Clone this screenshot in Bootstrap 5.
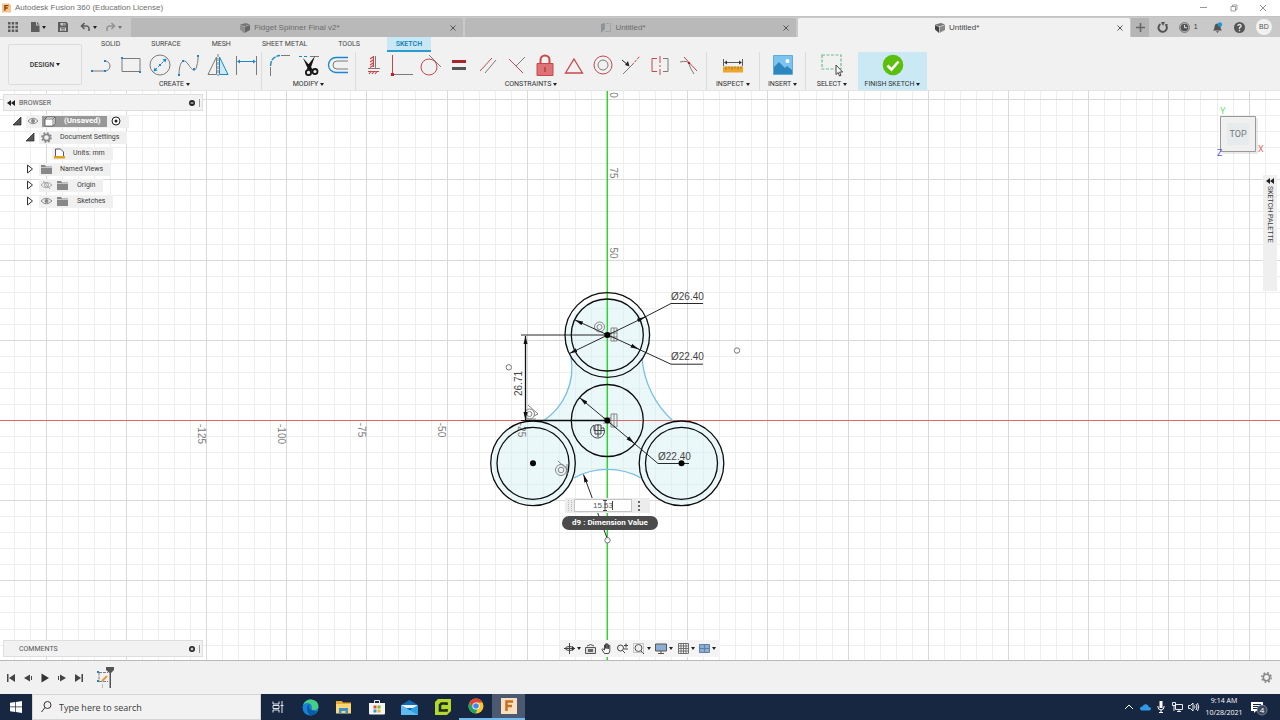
<!DOCTYPE html>
<html lang="en">
<head>
<meta charset="utf-8">
<meta name="viewport" content="width=device-width, initial-scale=1">
<title>Autodesk Fusion 360 (Education License)</title>
<link href="https://cdn.jsdelivr.net/npm/bootstrap@5.3.0/dist/css/bootstrap.min.css" rel="stylesheet">
<style>
body{font-family:Roboto,"Liberation Sans",sans-serif;font-size:7px;line-height:12px;color:#3c3c3c;background:#fff}
svg{display:block;flex:none;fill:none;overflow:visible}
.btn{--bs-btn-padding-x:0;--bs-btn-padding-y:0;--bs-btn-border-width:0;--bs-btn-font-size:7px;--bs-btn-line-height:12px;--bs-btn-border-radius:0;--bs-btn-color:#333;display:flex;align-items:center;justify-content:center}
.caret::after{content:"";border:2px solid transparent;border-top:3px solid #222;border-bottom:0;margin-left:2px}
.titlebar{height:16px;padding:0 2px;font:8px/16px "Liberation Sans",sans-serif;color:#6d6d6d}
.docbar{height:21px;background:#c9c9c9;border-top:1px solid #c2c2c2;font-family:"Liberation Sans",sans-serif;font-size:8px}
.quick{width:130px}
.doctab{background:#b9b9b9;color:#6c6c6c;margin:1px 1px 0;border-radius:2px 2px 0 0;flex:1 1 0;padding:0 2px 0 4px}
.doctab.current{background:#f1f1f1;color:#444}
.plus{width:18px;background:#b5b5b5;margin-top:1px}
.account{width:131px}
.avatar{width:16px;height:16px;border-radius:50%;background:#f1f1f1;font-size:7px;line-height:16px;text-align:center;color:#555}
.ribbon{height:54px;background:#f1f1f1;border-bottom:1px solid #e4e4e4}
.design{width:74px;height:41px;margin:7px 6px 0 8px;border:1px solid #dcdcdc!important;border-radius:2px;font-weight:500}
.modes{height:15px;padding-left:13px;column-gap:31px}
.modes a{color:#444;text-decoration:none;line-height:14px}
.modes .picked{background:#c9e8f5;color:#1583b8;font-weight:600;border-bottom:2px solid #2d9bd0;width:44px;margin-left:-4px;text-align:center;height:15px}
.group{border-right:1px solid #dcdcdc;padding:0 3px}
.group>:last-child,.finish>:last-child{margin-top:1px}
.group>:first-child,.finish>:first-child{margin-top:1px}
.finish{width:69px;background:#cbe9f4}
.g{stroke:#7b7b7b}.b{stroke:#1b87cf}.r{stroke:#c9464b}.k{stroke:#333}
.bf{fill:#1b87cf}.rf{fill:#c21f26}
.stage{min-height:0;background:#fff;overflow:hidden}
.scene{width:100%;height:100%;position:absolute;inset:0}
.dim{font:10px "Liberation Sans",sans-serif;fill:#444}
.axisnum{font:10px "Liberation Sans",sans-serif;fill:#808080;text-anchor:middle}
.sel{stroke:#76bfe3;stroke-width:1.3}
.edge{stroke:#0d0d0d;stroke-width:1.3}
.lead1{stroke:#111;stroke-width:.9}
.glyph{stroke:#858585;stroke-width:1}
.valuebar{height:15px;background:#ececec;padding:1px 9px}
.valuebar input{width:58px;height:13px;border:1px solid #c4c4c4;background:#fff;font:8px "Liberation Sans",sans-serif;color:#555;padding:0 18px 0 0;text-align:right;border-radius:0}
.tip{height:14px;border-radius:7px;background:#4b4b4b;color:#fff;font:bold 8px/14px Roboto,sans-serif;text-align:center}
.dock{width:200px;height:17px;background:#f2f2f2;border:1px solid #dedede;color:#555;padding:0 1px 0 3px;gap:4px}
.left-top{top:3px;left:3px}.left-bottom{bottom:3px;left:3px;padding-left:15px}
.tree{top:22px;left:12px}
.tree li{height:16px}
.chip{background:#f0f0f0;height:13px;padding:0 8px 0 2px}
.chip.fold{gap:5px}
.twist{width:10px;height:10px;margin-right:4px}
.unsaved{background:#989898;color:#fff;font-weight:700;font-size:8px;height:11px;width:65px;padding-left:2px}
.l1{padding-left:13px}.l2{padding-left:36px}
.cube{top:14px;right:12px}
.palette{top:84px;right:3px;width:14px;height:116px;background:#efefef;writing-mode:vertical-rl;line-height:14px;padding-top:3px;gap:2px}
.nav-tools{left:50%;margin-left:-80px;bottom:3px;width:160px;height:17px;background:#f4f4f4}
.timeline{height:34px;background:#f1f1f1;border-top:1px solid #b9b9b9;padding:0 5px 0 2px}
.timeline .btn{width:17px;height:20px}
.history{margin-left:10px}
.taskbar{height:26px;background:#172741;color:#fff;font-family:"Open Sans",sans-serif}
.start{width:32px}
.search{width:229px;background:#f2f2f2;border:1px solid #d5d5d5}
.search input{font:9px "Open Sans",sans-serif;color:#333;background:none;border:0;outline:0;width:180px;padding:0}
.search input::placeholder{color:#3a3a3a;opacity:1}
.app{width:33px}
.app.running{border-bottom:2px solid #76b9ed}
.app.front{background:#4b5a70}
.clock{width:46px;line-height:12px;text-align:center}
.tray{width:16px}
</style>
</head>
<body class="vh-100 d-flex flex-column overflow-hidden">
<header class="titlebar d-flex align-items-center justify-content-between">
  <div class="d-flex align-items-center"><svg class="me-1" width="9" height="10" viewBox="0 0 11 11"><path fill="#f6c48c" d="M0 0h9l2 2v9H0z"/><path d="M3.500 9V2.500H8M3.500 5.500H7" stroke="#8d3d0c" stroke-width="1.600"/></svg><span>Autodesk Fusion 360 (Education License)</span></div>
  <div class="d-flex align-items-center">
    <button class="btn px-2" aria-label="Minimize"><svg width="14" height="10" viewBox="0 0 14 10"><path stroke="#999" d="M4 4.500h7"/></svg></button>
    <button class="btn px-2" aria-label="Restore"><svg width="14" height="10" viewBox="0 0 14 10"><path stroke="#888" stroke-width=".8" d="M5 3.500h4.500V8H5zM6.500 3.500V2H11v4.500H9.500"/></svg></button>
    <button class="btn px-2" aria-label="Close"><svg width="14" height="10" viewBox="0 0 14 10"><path stroke="#777" stroke-width=".8" d="M4 2l6 6M10 2L4 8"/></svg></button>
  </div>
</header>

<div class="docbar d-flex">
  <div class="quick d-flex align-items-center ps-1 gap-2">
    <button class="btn ms-1" aria-label="Data panel"><svg width="10" height="10" viewBox="0 0 10 10"><path fill="#5d5d5d" d="M0 0h2.500v2.500H0zM3.700 0h2.500v2.500H3.700zM7.400 0H10v2.500H7.400zM0 3.700h2.500v2.500H0zM3.700 3.700h2.500v2.500H3.700zM7.400 3.700H10v2.500H7.400zM0 7.400h2.500V10H0zM3.700 7.400h2.500V10H3.700zM7.400 7.400H10V10H7.400z"/></svg></button>
    <button class="btn caret ms-1" aria-label="File"><svg width="10" height="10" viewBox="0 0 10 10"><path fill="#5d5d5d" d="M1 0h5v3.500h3.500V10H1zM7 0l2.500 2.500H7z"/></svg></button>
    <button class="btn ms-1 me-1" aria-label="Save"><svg width="10" height="10" viewBox="0 0 10 10"><path fill="#5d5d5d" d="M0 0h8.500L10 1.500V10H0z"/><path fill="#c9c9c9" d="M2.500 1h5v2.500h-5zM2 5.500h6V9H2z"/><path fill="#5d5d5d" d="M5.300 1.300h1.200v2H5.300zM3 6.300h4v.8H3zM3 7.700h4v.8H3z"/></svg></button>
    <button class="btn caret" aria-label="Undo"><svg width="11" height="10" viewBox="0 0 11 10"><path stroke="#5d5d5d" stroke-width="1.600" d="M4.500 1L1.500 4l3 3M2 4h4.500Q9.500 4 9 9"/></svg></button>
    <button class="btn caret opacity-50" aria-label="Redo"><svg width="11" height="10" viewBox="0 0 11 10"><path stroke="#5d5d5d" stroke-width="1.600" d="M6.500 1l3 3-3 3M9 4H4.500Q1.500 4 2 9"/></svg></button>
  </div>
  <div class="doctab d-flex align-items-center"><span class="flex-fill d-flex justify-content-center align-items-center gap-1"><svg width="10" height="10" viewBox="0 0 10 10"><path fill="#777" d="M0 1.500L6 0l4 1.500L4 3.500z"/><path fill="#8d8d8d" d="M0 2l4 2v6L0 6.500z"/><path fill="#666" d="M4.500 4L10 2v5l-5.500 3z"/></svg>Fidget Spinner Final v2*</span><button class="btn px-1" aria-label="Close tab"><svg width="8" height="8" viewBox="0 0 8 8"><path stroke="#555" d="M1.500 1.500l5 5M6.500 1.500l-5 5"/></svg></button></div>
  <div class="doctab d-flex align-items-center"><span class="flex-fill d-flex justify-content-center align-items-center gap-1"><svg width="10" height="10" viewBox="0 0 10 10"><path fill="#8c9696" d="M0 1l4-1v6l-4 4z"/><path stroke="#999" d="M5.500.5h4v8h-6" stroke-dasharray="2 1"/></svg>Untitled*</span><button class="btn px-1" aria-label="Close tab"><svg width="8" height="8" viewBox="0 0 8 8"><path stroke="#555" d="M1.500 1.500l5 5M6.500 1.500l-5 5"/></svg></button></div>
  <div class="doctab current d-flex align-items-center"><span class="flex-fill d-flex justify-content-center align-items-center gap-1"><svg width="10" height="10" viewBox="0 0 10 10"><path fill="#777" d="M0 1.500L6 0l4 1.500L4 3.500z"/><path fill="#444" d="M0 2l4 2v6L0 6.500z"/><path fill="#888" d="M4.500 4L10 2v5l-5.500 3z"/></svg>Untitled*</span><button class="btn px-1" aria-label="Close tab"><svg width="8" height="8" viewBox="0 0 8 8"><path stroke="#555" d="M1.500 1.500l5 5M6.500 1.500l-5 5"/></svg></button></div>
  <button class="btn plus" aria-label="New tab"><svg width="9" height="9" viewBox="0 0 9 9"><path stroke="#666" stroke-width="1.600" d="M4.500 0v9M0 4.500h9"/></svg></button>
  <div class="account d-flex align-items-center justify-content-between ps-2 pe-2">
    <button class="btn" aria-label="Extensions"><svg width="11" height="11" viewBox="0 0 11 11"><path stroke="#555" stroke-width="2" d="M3.500 2A4.200 4.200 0 1 0 9 3"/><path fill="#555" d="M4 0h4L6 4zM8 2l3 0-2 2.500z"/></svg></button>
    <button class="btn gap-1 me-1" aria-label="Job status"><svg width="11" height="11" viewBox="0 0 11 11"><circle cx="5.500" cy="5.500" r="4.900" stroke="#666" stroke-width=".9"/><circle cx="5.500" cy="5.500" r="3.800" fill="#555"/><path stroke="#ddd" d="M5.500 3v2.700H8"/></svg>1</button>
    <button class="btn" aria-label="Notifications"><svg width="11" height="11" viewBox="0 0 11 11"><path fill="#555" d="M1 8.500Q2.500 7.500 2.500 4.500 3 1.500 5.500 1.500T8.500 4.500Q8.500 7.500 10 8.500zM4 9.200h3L5.500 11z"/><circle cx="8" cy="2.500" r="2.200" fill="#179bd7"/></svg></button>
    <button class="btn" aria-label="Help"><svg width="11" height="11" viewBox="0 0 11 11"><circle cx="5.500" cy="5.500" r="5.500" fill="#555"/><path stroke="#e3e3e3" stroke-width="1.300" d="M3.800 4Q4 2.500 5.500 2.500T7.200 4Q7 5 5.500 5.700V7M5.500 7.800v1.400"/></svg></button>
    <span class="avatar">BD</span>
  </div>
</div>

<nav class="ribbon d-flex flex-shrink-0">
  <button class="btn design caret">DESIGN</button>
  <div class="flex-fill d-flex flex-column">
    <div class="modes d-flex">
      <a href="#">SOLID</a><a href="#">SURFACE</a><a href="#">MESH</a><a href="#">SHEET METAL</a><a href="#">TOOLS</a><a href="#" class="picked">SKETCH</a>
    </div>
    <div class="d-flex flex-fill">
      <div class="group px-0" style="width:174px">
        <div class="d-flex">
          <button class="btn flex-fill" aria-label="Line"><svg width="24" height="24" viewBox="0 0 24 24"><path class="g" d="M2 18h13a5 5 0 0 0 0-10"/><path class="bf" d="M1 17h2v2H1zM14 17h2v2h-2zM14 7h2v2h-2z"/></svg></button>
          <button class="btn flex-fill" aria-label="Rectangle"><svg width="24" height="24" viewBox="0 0 24 24"><path class="g" d="M3 5.500h18v13H3z"/><path class="bf" d="M2 4h2v2H2zM20 18h2v2h-2z"/></svg></button>
          <button class="btn flex-fill" aria-label="Circle"><svg width="24" height="24" viewBox="0 0 24 24"><circle class="g" cx="12" cy="12" r="10"/><path class="b" d="M7 17L17 7" stroke-dasharray="3 1.500"/><path class="bf" d="M5.500 18.500l1-4 3 3zM18.500 5.500l-1 4-3-3zM11 11h2v2h-2z"/></svg></button>
          <button class="btn flex-fill" aria-label="Spline"><svg width="24" height="24" viewBox="0 0 24 24"><path class="g" d="M2 22C2 8 7 5 11 11S18 20 19.500 14 21 8 21 3"/><path class="bf" d="M1 21h2v2H1zM16 15h2v2h-2zM20 2h2v2h-2zM5 7h2v2H5z"/></svg></button>
          <button class="btn flex-fill" aria-label="Mirror"><svg width="24" height="24" viewBox="0 0 24 24"><path class="g" d="M10.500 4v17.500H2z"/><path class="b" fill="#cfe9f6" d="M13.500 4v17.500H22z"/><path class="g" stroke-dasharray="3 1" d="M12 1v22"/></svg></button>
          <button class="btn flex-fill" aria-label="Dimension"><svg width="24" height="24" viewBox="0 0 24 24"><path class="g" d="M1.500 3v19M21.500 3v19"/><path class="b" d="M4 8.500h16"/><path class="bf" d="M2 8.500l3-2v4zM21 8.500l-3-2v4z"/></svg></button>
        </div>
        <button class="btn caret w-100">CREATE</button>
      </div>
      <div class="group" style="width:94px">
        <div class="d-flex">
          <button class="btn flex-fill" aria-label="Fillet"><svg width="24" height="24" viewBox="0 0 24 24"><path class="b" stroke-width="1.400" stroke-dasharray="5 1" d="M2.500 13Q3 3.500 12 2.500"/><path class="g" d="M13 2.500h9M2.500 14v9"/></svg></button>
          <button class="btn flex-fill" aria-label="Trim"><svg width="24" height="24" viewBox="0 0 24 24"><path class="b" stroke-dasharray="3 2" d="M2 3.500h9"/><path class="g" d="M13 3.500h9"/><path fill="#161616" d="M6 5l8 9 2 3-2 1-4-4zM18 3l-5 14-3-1 1-4z"/><circle stroke="#161616" stroke-width="1.800" cx="11.500" cy="19.500" r="2.600"/><circle stroke="#161616" stroke-width="1.800" cx="18" cy="18.500" r="2.500"/></svg></button>
          <button class="btn flex-fill" aria-label="Offset"><svg width="24" height="24" viewBox="0 0 24 24"><path class="b" stroke-width="1.300" d="M22 4.500h-12a7.500 7.500 0 0 0 0 15h12"/><path class="g" d="M22 8H11a4 4 0 0 0 0 8h11"/></svg></button>
        </div>
        <button class="btn caret w-100">MODIFY</button>
      </div>
      <div class="group" style="width:351px">
        <div class="d-flex">
          <button class="btn flex-fill" aria-label="Horizontal/Vertical"><svg width="24" height="24" viewBox="0 0 24 24"><path class="g" d="M14.500 3v12M7 15.500h12"/><path class="r" stroke-width="1.200" d="M12.500 3v11M9 6l3-2M9 9l3-2M9 12l3-2M9 14.500l3-2M7 18.500h11M8 21l2-2.500M11 21l2-2.500M14 21l2-2.500"/></svg></button>
          <button class="btn flex-fill" aria-label="Coincident"><svg width="24" height="24" viewBox="0 0 24 24"><path class="r" d="M2.500 2v18"/><path class="g" d="M4 21.500h19"/><path class="rf" d="M1 20h3v3H1z"/></svg></button>
          <button class="btn flex-fill" aria-label="Tangent"><svg width="24" height="24" viewBox="0 0 24 24"><circle class="r" cx="10" cy="14" r="8"/><path class="g" d="M10 2l12 12"/></svg></button>
          <button class="btn flex-fill" aria-label="Equal"><svg width="24" height="24" viewBox="0 0 24 24"><path fill="#a9252b" d="M5 7h14v3H5z"/><path fill="#555" d="M5 14h14v3H5z"/></svg></button>
          <button class="btn flex-fill" aria-label="Parallel"><svg width="24" height="24" viewBox="0 0 24 24"><path class="r" d="M4 18L16 5"/><path class="g" d="M9 20L20 7"/></svg></button>
          <button class="btn flex-fill" aria-label="Perpendicular"><svg width="24" height="24" viewBox="0 0 24 24"><path class="r" d="M4 6l14 14"/><path class="g" d="M11 13l9-9"/></svg></button>
          <button class="btn flex-fill" aria-label="Fix"><svg width="24" height="24" viewBox="0 0 24 24"><path stroke="#c9464b" stroke-width="2" d="M7.500 11V7a4.500 4.500 0 0 1 9 0v4"/><path fill="#dd7376" stroke="#c9464b" d="M4 10.500h16v12H4z"/><path stroke="#a9252b" d="M12 14v5"/></svg></button>
          <button class="btn flex-fill" aria-label="Midpoint"><svg width="24" height="24" viewBox="0 0 24 24"><path class="r" stroke-width="1.300" d="M12 6l8.500 14h-17z"/></svg></button>
          <button class="btn flex-fill" aria-label="Concentric"><svg width="24" height="24" viewBox="0 0 24 24"><circle class="r" cx="12" cy="12" r="9"/><circle class="g" cx="12" cy="12" r="5"/></svg></button>
          <button class="btn flex-fill" aria-label="Collinear"><svg width="24" height="24" viewBox="0 0 24 24"><path class="g" d="M4 21l9-9"/><path class="r" stroke-dasharray="3 1" d="M13 12l8-9"/><path stroke="#222" d="M3 7l6 5"/><path fill="#222" d="M10.500 13.500L6 12l3-4z"/></svg></button>
          <button class="btn flex-fill" aria-label="Symmetry"><svg width="24" height="24" viewBox="0 0 24 24"><path class="r" d="M9 5.500H4v13h5"/><path class="g" d="M15 5.500h5v13h-5"/><path class="r" stroke-dasharray="7 2 2 2" d="M12 3v19"/></svg></button>
          <button class="btn flex-fill" aria-label="Curvature"><svg width="24" height="24" viewBox="0 0 24 24"><path class="g" d="M3 9q8-2 9 2t5 10"/><path class="r" d="M7 4l13 14"/><path class="rf" d="M11 9h2v2h-2z"/></svg></button>
        </div>
        <button class="btn caret w-100">CONSTRAINTS</button>
      </div>
      <div class="group" style="width:53px">
        <button class="btn w-100" aria-label="Measure"><svg width="24" height="24" viewBox="0 0 24 24"><path class="k" stroke-width=".8" d="M2.500 6v7M21.500 6v7M4 9.500h16"/><path fill="#333" d="M3 9.500l3-2v4zM21 9.500l-3-2v4z"/><path fill="#eda52c" d="M2 13.500h20v6H2z"/><path stroke="#8b5b0e" stroke-width=".7" d="M5 13.500v3M8 13.500v2M11 13.500v3M14 13.500v2M17 13.500v3M20 13.500v2"/></svg></button>
        <button class="btn caret w-100">INSPECT</button>
      </div>
      <div class="group" style="width:46px">
        <button class="btn w-100" aria-label="Insert image"><svg width="24" height="24" viewBox="0 0 24 24"><path fill="#7cc4ef" stroke="#4a9fd4" stroke-width=".8" d="M2.500 2.500h19v19h-19z"/><path fill="#2e86bf" d="M3 14l5-5 6 6 2-2 5 4v4H3z"/><circle cx="16.500" cy="8" r="2" fill="#fff"/></svg></button>
        <button class="btn caret w-100">INSERT</button>
      </div>
      <div class="group border-0" style="width:52px">
        <button class="btn w-100" aria-label="Select"><svg width="24" height="24" viewBox="0 0 24 24"><path stroke="#6dbd8d" stroke-width="1.200" stroke-dasharray="3 1.500" d="M2 2h19v14H2z"/><path fill="#fff" stroke="#333" stroke-width=".9" d="M16 12v9.500l2.200-2 1.300 3.500 1.500-.6-1.400-3.400h3z"/></svg></button>
        <button class="btn caret w-100">SELECT</button>
      </div>
      <div class="finish">
        <button class="btn w-100" aria-label="Finish sketch"><svg width="24" height="24" viewBox="0 0 24 24"><circle cx="12" cy="12" r="10.300" fill="#5bbf0b"/><path stroke="#fff" stroke-width="2.600" d="M6.500 12.500l4 4 7-8"/></svg></button>
        <button class="btn caret w-100">FINISH SKETCH</button>
      </div>
    </div>
  </div>
</nav>

<main class="stage flex-fill position-relative">
  <svg class="scene" viewBox="0 91 1280 569" preserveAspectRatio="xMidYMid slice">
    <defs>
      <marker id="tip" viewBox="0 0 8 6" refX="8" refY="3" markerWidth="8" markerHeight="6" markerUnits="userSpaceOnUse" orient="auto-start-reverse"><path d="M0 1L8 3 0 5z" fill="#111"/></marker>
    </defs>
    <g id="grid" shape-rendering="crispEdges"></g>
    <path fill="#d3eff5" fill-opacity=".45" d="M565 335A42.300 42.300 0 0 1 649 335Q649 350 642 360A95 95 0 0 0 673 421A42.300 42.300 0 1 1 641 478A70 70 0 0 0 574 478A42.300 42.300 0 1 1 543 421A63.700 63.700 0 0 0 572 360Q565 350 565 335z"/>
    <g><path stroke="#e36464" d="M0 420.500h1280"/><path stroke="#2bd62b" stroke-width="1.500" d="M607.300 91v569"/></g>
    <g class="axisnum">
      <text transform="translate(610 95) rotate(90)">0</text>
      <text transform="translate(610 173) rotate(90)">75</text>
      <text transform="translate(610 253) rotate(90)">50</text>
      <text transform="translate(198 434) rotate(90)">-125</text>
      <text transform="translate(278 434) rotate(90)">-100</text>
      <text transform="translate(358 430) rotate(90)">-75</text>
      <text transform="translate(438 430) rotate(90)">-50</text>
      <text transform="translate(518 430) rotate(90)">-25</text>
    </g>
    <g class="sel">
      <path d="M571 357A63.700 63.700 0 0 1 543 421M673 421A95 95 0 0 1 642 358M574 478A70 70 0 0 1 641 478"/>
    </g>
    <g class="edge">
      <circle cx="607.300" cy="335" r="42.300"/><circle cx="607.300" cy="335" r="36"/>
      <circle cx="607.300" cy="420.500" r="36"/>
      <circle cx="533" cy="463.300" r="42.300"/><circle cx="533" cy="463.300" r="36"/>
      <circle cx="681.500" cy="463.300" r="42.300"/><circle cx="681.500" cy="463.300" r="36"/>
      <path d="M525 420.500H607"/>
    </g>
    <g class="glyph">
      <circle cx="599.500" cy="327" r="5"/><circle cx="599.500" cy="327" r="2.500"/>
      <path d="M611 328h6v13h-6zM614 328v13M609 333h8M609 337h8M611 414h6v13h-6zM614 414v13M603 418h8M603 423h8"/>
      <circle cx="529.500" cy="414" r="5"/><circle cx="529.500" cy="414" r="2.500"/><path d="M528 405l10 9-4 2M526 419h10"/>
      <circle cx="561" cy="470" r="5.500"/><circle cx="561" cy="470" r="2.800"/><path d="M558 461l10 9M567 464v10"/>
      <path stroke="#444" d="M594 425a7 7 0 1 0 10.500 5.500H594zM595 425h6v9h-6zM598 424v13M601 428h3v3"/>
    </g>
    <g class="lead1">
      <path d="M521 335H607M521 420.500h5"/>
      <path stroke-width="1.300" d="M525.500 420V336" marker-end="url(#tip)" marker-start="url(#tip)"/>
      <path d="M569.500 353.500L645 317" marker-start="url(#tip)" marker-end="url(#tip)"/><path d="M643 318L671 303.500h32"/>
      <path d="M575 320L638.500 349" marker-start="url(#tip)" marker-end="url(#tip)"/><path d="M636 348L671 364.200h32"/>
      <path d="M580 398L634 443" marker-start="url(#tip)" marker-end="url(#tip)"/><path d="M632 441.500L658 463.500h31"/>
      <path d="M583.500 474.500L607 538" marker-start="url(#tip)"/>
    </g>
    <g fill="#000"><circle cx="607.300" cy="335" r="3"/><circle cx="607.300" cy="420.500" r="3"/><circle cx="533" cy="463.300" r="3"/><circle cx="681.500" cy="463.300" r="3"/></g>
    <g fill="#fff" stroke="#666" stroke-width=".9"><circle cx="508.800" cy="367.300" r="2.700"/><circle cx="737" cy="350.500" r="2.700"/><circle cx="607.500" cy="540.300" r="2.700"/></g>
    <g class="dim">
      <text x="671" y="300">Ø26.40</text>
      <text x="671" y="360">Ø22.40</text>
      <text x="658" y="460">Ø22.40</text>
      <text transform="translate(522 396) rotate(-90)">26.71</text>
    </g>
    <foreignObject x="565" y="498" width="85" height="15">
      <div class="valuebar d-flex align-items-center justify-content-between"><input type="text" value="15.53" aria-label="Dimension value"><svg width="4" height="10" viewBox="0 0 4 10"><path fill="#666" d="M1 0h2v2H1zM1 4h2v2H1zM1 8h2v2H1z"/></svg></div>
    </foreignObject>
    <path stroke="#333" stroke-width=".9" d="M603 500.500h4M603 510.500h4M605 500.500v10M612.500 501v9"/>
    <path stroke="#bbb" stroke-dasharray="1 1" d="M568.500 500v11M571.500 500v11"/>
    <foreignObject x="562" y="516" width="96" height="14"><div class="tip">d9 : Dimension Value</div></foreignObject>
  </svg>

  <div class="dock left-top position-absolute d-flex align-items-center">
    <svg width="8" height="6" viewBox="0 0 8 6"><path fill="#222" d="M4 0v6L0 3zM8 0v6L4 3z"/></svg><span class="flex-fill">BROWSER</span>
    <svg width="14" height="10" viewBox="0 0 14 10"><circle cx="5" cy="5" r="3" fill="#222"/><path stroke="#fff" d="M3.500 5h3"/><path stroke="#999" d="M12.500 1v8"/></svg>
  </div>
  <ul class="tree position-absolute list-unstyled m-0">
    <li class="d-flex align-items-center"><svg class="twist" viewBox="0 0 10 10"><path fill="#555" stroke="#222" stroke-width=".7" d="M9 1v8H1z"/></svg>
      <span class="chip d-flex align-items-center gap-1"><svg width="10" height="8" viewBox="0 0 10 8"><path stroke="#888" d="M0 4Q5-1.500 10 4 5 9.500 0 4z"/><circle cx="5" cy="4" r="2" fill="#888"/></svg><span class="unsaved d-flex align-items-center gap-2"><svg width="12" height="11" viewBox="0 0 12 11"><path fill="#fff" stroke="#555" stroke-width=".8" d="M1 3l2-2h8v7l-2 2H1zM1 3h8v7M9 3l2-2"/></svg>(Unsaved)</span><svg width="10" height="10" viewBox="0 0 10 10"><circle cx="5" cy="5" r="4" stroke="#222" fill="#fff"/><circle cx="5" cy="5" r="1.500" fill="#222"/></svg></span></li>
    <li class="d-flex align-items-center l1"><svg class="twist" viewBox="0 0 10 10"><path fill="#555" stroke="#222" stroke-width=".7" d="M9 1v8H1z"/></svg>
      <span class="chip d-flex align-items-center gap-2"><svg width="11" height="11" viewBox="0 0 11 11"><circle cx="5.500" cy="5.500" r="3.200" stroke="#888" stroke-width="1.800"/><circle cx="5.500" cy="5.500" r="4.600" stroke="#888" stroke-width="1.600" stroke-dasharray="1.800 1.800"/></svg>Document Settings</span></li>
    <li class="d-flex align-items-center l2"><span class="chip d-flex align-items-center gap-2 ms-1"><svg width="11" height="11" viewBox="0 0 11 11"><path fill="#fff" stroke="#445" stroke-width=".9" d="M1.500 1h5l3 3v5h-8z"/><path fill="#e0a020" d="M0 8h11v2.500H0z"/></svg>Units: mm</span></li>
    <li class="d-flex align-items-center l1"><svg class="twist" viewBox="0 0 10 10"><path stroke="#333" fill="#fff" d="M2.500 1v8L7.500 5z"/></svg>
      <span class="chip d-flex align-items-center gap-2"><svg width="11" height="9" viewBox="0 0 11 9"><path fill="#888" d="M0 0h4l1 1.500h6V9H0z"/><path stroke="#f0f0f0" stroke-width=".6" d="M0 2.500h11"/></svg>Named Views</span></li>
    <li class="d-flex align-items-center l1"><svg class="twist" viewBox="0 0 10 10"><path stroke="#333" fill="#fff" d="M2.500 1v8L7.500 5z"/></svg>
      <span class="chip fold d-flex align-items-center"><svg width="11" height="8" viewBox="0 0 11 8"><path stroke="#999" stroke-width=".8" d="M0 4Q5-1.500 11 4 5 9.500 0 4zM2 0l7 8"/><circle cx="5.500" cy="4" r="2" stroke="#999" stroke-width=".8"/></svg><svg class="me-1" width="11" height="9" viewBox="0 0 11 9"><path fill="#888" d="M0 0h4l1 1.500h6V9H0z"/><path stroke="#f0f0f0" stroke-width=".6" d="M0 2.500h11"/></svg>Origin</span></li>
    <li class="d-flex align-items-center l1"><svg class="twist" viewBox="0 0 10 10"><path stroke="#333" fill="#fff" d="M2.500 1v8L7.500 5z"/></svg>
      <span class="chip fold d-flex align-items-center"><svg width="11" height="8" viewBox="0 0 11 8"><path stroke="#888" d="M0 4Q5-1.500 11 4 5 9.500 0 4z"/><circle cx="5.500" cy="4" r="2" fill="#888"/></svg><svg class="me-1" width="11" height="9" viewBox="0 0 11 9"><path fill="#888" d="M0 0h4l1 1.500h6V9H0z"/><path stroke="#f0f0f0" stroke-width=".6" d="M0 2.500h11"/></svg>Sketches</span></li>
  </ul>

  <svg class="cube position-absolute" width="54" height="54" viewBox="0 0 54 54" font-family="Roboto, sans-serif" font-size="9">
    <path fill="#b8b8b8" fill-opacity=".3" d="M8 13h36v36H8z"/><path fill="#f0f0f0" stroke="#999" d="M6.500 11.500h35v35h-35z"/><path fill="#e6ecee" d="M13 18h22v22H13z"/>
    <text x="24" y="32" text-anchor="middle" fill="#777">TOP</text><text x="6" y="9" fill="#6be06b">Y</text><text x="44" y="47" fill="#e26a6a">X</text><text x="3" y="51" fill="#5a5ae0">Z</text>
  </svg>
  <div class="palette position-absolute d-flex align-items-center"><svg width="8" height="6" viewBox="0 0 8 6"><path fill="#222" d="M4 0v6L0 3zM8 0v6L4 3z"/></svg>SKETCH PALETTE</div>

  <div class="dock left-bottom position-absolute d-flex align-items-center">
    <span class="flex-fill">COMMENTS</span>
    <svg width="14" height="10" viewBox="0 0 14 10"><circle cx="5" cy="5" r="3" fill="#222"/><path stroke="#fff" d="M3.500 5h3M5 3.500v3"/><path stroke="#999" d="M12.500 1v8"/></svg>
  </div>
  <div class="nav-tools position-absolute d-flex align-items-center justify-content-between px-1">
    <button class="btn caret" aria-label="Orbit"><svg width="11" height="11" viewBox="0 0 11 11"><path stroke="#444" d="M5.500 0v11M0 5.500h11"/><ellipse cx="5.500" cy="5.500" rx="4" ry="2" stroke="#444"/><path fill="#333" d="M8 3l3 2.500L8 8z"/></svg></button>
    <button class="btn" aria-label="Look at"><svg width="11" height="11" viewBox="0 0 11 11"><path stroke="#555" fill="#ddd" d="M.5 4.500h10v6H.5zM2 3Q5.500 0 9 3"/><path fill="#666" d="M3 6h5v3H3z"/></svg></button>
    <button class="btn" aria-label="Pan"><svg width="11" height="11" viewBox="0 0 11 11"><path fill="#fff" stroke="#333" stroke-width=".9" d="M3.500 10.500L.8 6.500l1-.7L3.500 7V2h1.200v3.500V.8H6V5.500V1.200h1.200V6l.3-3.500h1.300L8.800 8l-1 2.500z"/></svg></button>
    <button class="btn" aria-label="Zoom"><svg width="12" height="11" viewBox="0 0 12 11"><circle cx="4.500" cy="5" r="3" stroke="#444"/><path stroke="#444" d="M6.500 7.500L9 10M8 2.500h4M10 .5v4M8 6h4"/></svg></button>
    <button class="btn caret" aria-label="Fit"><svg width="12" height="11" viewBox="0 0 12 11"><circle cx="5.500" cy="5" r="3.500" stroke="#555" fill="#e8f2ec"/><path stroke="#444" d="M8 8l3 3"/><path stroke="#999" stroke-dasharray="1 1" d="M.5.500h10v9H.5z"/></svg></button>
    <button class="btn caret" aria-label="Display settings"><svg width="12" height="11" viewBox="0 0 12 11"><path fill="#8cadd4" stroke="#555" d="M.5 1h11v7H.5z"/><path stroke="#555" d="M3 10.500h6M6 8v2"/></svg></button>
    <button class="btn caret" aria-label="Grid settings"><svg width="11" height="11" viewBox="0 0 11 11"><path stroke="#666" stroke-width=".9" d="M.5.500h10v10H.5zM3 0v11M5.500 0v11M8 0v11M0 3h11M0 5.500h11M0 8h11"/></svg></button>
    <button class="btn caret" aria-label="Viewports"><svg width="11" height="11" viewBox="0 0 11 11"><path fill="#8cadd4" stroke="#5f7fa8" d="M.5 1.500h10v8H.5zM5.500 1v9M0 5.500h11"/></svg></button>
  </div>
</main>

<section class="timeline d-flex align-items-center flex-shrink-0">
  <button class="btn" aria-label="Go to start"><svg width="10" height="10" viewBox="0 0 10 10"><path fill="#444" d="M1 1h1.500v8H1zM9 1v8L3 5z"/></svg></button>
  <button class="btn" aria-label="Step back"><svg width="10" height="10" viewBox="0 0 10 10"><path fill="#444" d="M7 1.500v7L1 5zM8 3h1v4H8z"/></svg></button>
  <button class="btn" aria-label="Play"><svg width="10" height="10" viewBox="0 0 10 10"><path fill="#333" d="M1.500.500v9L9 5z"/></svg></button>
  <button class="btn" aria-label="Step forward"><svg width="10" height="10" viewBox="0 0 10 10"><path fill="#444" d="M3 1.500v7L9 5zM1 3h1v4H1z"/></svg></button>
  <button class="btn" aria-label="Go to end"><svg width="10" height="10" viewBox="0 0 10 10"><path fill="#444" d="M7.500 1H9v8H7.500zM1 1v8l6-4z"/></svg></button>
  <svg class="history" width="20" height="22" viewBox="0 0 20 22"><path class="g" stroke-dasharray="3 1" d="M2 5.500h9M2 14.500h9M2 5.500v9"/><path class="bf" d="M0 4h2v2H0zM0 13h2v2H0z"/><path stroke="#e69a3c" stroke-width="2" d="M5 14l5-5"/><path stroke="#bbb" d="M5.500 17v4"/><path fill="#555" d="M9 0h8v3l-3 3v15h-1.500V6L9 3z"/></svg>
  <button class="btn ms-auto" aria-label="Preferences"><svg width="11" height="11" viewBox="0 0 11 11"><circle cx="5.500" cy="5.500" r="3.200" stroke="#888" stroke-width="1.600"/><circle cx="5.500" cy="5.500" r="4.700" stroke="#888" stroke-width="1.500" stroke-dasharray="1.850 1.850"/></svg></button>
</section>

<footer class="taskbar d-flex flex-shrink-0">
  <button class="btn start" aria-label="Start"><svg width="12" height="12" viewBox="0 0 12 12"><path fill="#fff" d="M0 1.800L5.300 1v4.600H0zM6 .9L12 0v5.600H6zM0 6.300h5.300V11L0 10.200zM6 6.300h6V12l-6-.9z"/></svg></button>
  <label class="search d-flex align-items-center gap-2 ps-2"><svg width="10" height="12" viewBox="0 0 10 12"><circle cx="6.500" cy="4" r="3.500" stroke="#333"/><path stroke="#333" d="M4 6.500L.5 11"/></svg><input type="text" placeholder="Type here to search" aria-label="Search"></label>
  <button class="btn app" aria-label="Task view"><svg width="12" height="12" viewBox="0 0 12 12"><path stroke="#e4e8ee" d="M1 .5v2.500h6V.500M1 11.500V9h6v2.500M1 4.500h6v3H1zM10 0v12M8.500 4.500h3"/></svg></button>
  <button class="btn app" aria-label="Edge"><svg width="17" height="17" viewBox="0 0 17 17"><circle cx="8.500" cy="8.500" r="8" fill="#1683d5"/><path fill="#45cf85" d="M1 6Q4 0 9 .5q7 .5 7.500 7Q16 11 12 11q-3 0-2-2Q10 4 5 4 2 4.500 1 6z"/><path fill="#0c59a4" d="M5 9q0-3 3-4-2 3 0 5t7 2q-2 4-6 4.500Q5 15 5 9z"/></svg></button>
  <button class="btn app" aria-label="File Explorer"><svg width="15" height="13" viewBox="0 0 15 13"><path fill="#e8a92f" d="M0 0h6l1 1.500h8V12H0z"/><path fill="#fbd775" d="M0 3h15v9.500H0z"/><path fill="#3f8fcf" d="M3 7h9v5.500h-2.500V10h-4v2.500H3z"/></svg></button>
  <button class="btn app" aria-label="Store"><svg width="16" height="16" viewBox="0 0 16 16"><path stroke="#eee" d="M5.500 5V1.500h5V5"/><path fill="#f4f4f4" d="M0 4h16v10.500q0 1-1 1H1q-1 0-1-1z"/><path fill="#e8502e" d="M4.500 6.500h3v3h-3z"/><path fill="#7db928" d="M8.500 6.500h3v3h-3z"/><path fill="#2a9de0" d="M4.500 10.500h3v3h-3z"/><path fill="#f5b31a" d="M8.500 10.500h3v3h-3z"/></svg></button>
  <button class="btn app" aria-label="Mail"><svg width="17" height="15" viewBox="0 0 17 15"><path fill="#1268b3" d="M0 5l8.500-5L17 5v4H0z"/><path fill="#e9f3fb" d="M1 5h15v3H1z"/><path fill="#2f9fe4" d="M0 5l8.500 5L17 5v10H0z"/><path fill="#5cbcf0" d="M0 5l17 10H0z"/></svg></button>
  <button class="btn app" aria-label="Camtasia"><svg width="16" height="16" viewBox="0 0 16 16"><path fill="#b4d92c" d="M3 0h13v12l-4 4H0V3z"/><path stroke="#1a2c1a" stroke-width="2.600" d="M11.500 6V4.500h-5l-1.500 1.500v5.500h6.500V10"/></svg></button>
  <button class="btn app running" aria-label="Chrome"><svg width="16" height="16" viewBox="0 0 16 16"><circle cx="8" cy="8" r="7.500" fill="#f7c52c"/><path fill="#dc4437" d="M1.500 4.200A7.500 7.500 0 0 1 14.600 4.500H8L4.600 9.500z"/><path fill="#1da462" d="M1.500 4.200L5 10q1.500 2 4.500 1.300l-2 4.200A7.500 7.500 0 0 1 1.500 4.200z"/><circle cx="8" cy="8" r="3.600" fill="#fff"/><circle cx="8" cy="8" r="2.800" fill="#4285f4"/></svg></button>
  <button class="btn app running front" aria-label="Fusion 360"><svg width="16" height="16" viewBox="0 0 16 16"><path fill="#f7dfc0" d="M0 0h16v16H0z"/><path stroke="#c7701f" stroke-width="2.500" d="M5.500 13V3.500H12M5.500 8H11"/></svg></button>
  <div class="ms-auto d-flex align-items-center">
    <button class="btn tray" aria-label="Hidden icons"><svg width="10" height="10" viewBox="0 0 10 10"><path stroke="#fff" d="M1 7l4-4 4 4"/></svg></button>
    <button class="btn tray" aria-label="OneDrive"><svg width="11" height="8" viewBox="0 0 11 8"><path fill="#2f9be8" d="M2 7.500Q0 7.500 0 5.500T2.500 3.500Q3.500 1 6 1.200T8.800 4Q11 4 11 5.800T9 7.500z"/></svg></button>
    <button class="btn tray" aria-label="Microphone"><svg width="8" height="12" viewBox="0 0 8 12"><path fill="#fff" d="M2.500 0h3v7h-3zM3.500 9h1v2h-1zM2 11h4v1H2z"/><path stroke="#fff" d="M.8 5Q.8 9 4 9t3.200-4"/></svg></button>
    <button class="btn tray" aria-label="Network"><svg width="11" height="10" viewBox="0 0 11 10"><path stroke="#fff" stroke-width=".9" d="M3.500 2.500h7v5h-7zM5 9.500h4M7 7.500v2M.5.500h3v3h-3zM2 3.500V9"/></svg></button>
    <button class="btn tray" aria-label="Volume"><svg width="11" height="10" viewBox="0 0 11 10"><path stroke="#fff" stroke-width=".9" d="M.5 3.500h2L5 1v8L2.500 6.500h-2zM6.500 3.500q1 1.500 0 3M8 2q2 3 0 6M9.500 1q2.500 4 0 8"/></svg></button>
    <div class="clock">9:14 AM<br>10/28/2021</div>
    <button class="btn px-1 me-2" aria-label="Action center, 4 new"><svg width="17" height="17" viewBox="0 0 17 17"><path fill="#fff" d="M0 3h12v9H5l-2 2v-2H0z"/><path stroke="#172741" d="M2 5.500h8M2 7.500h8M2 9.500h6"/><circle cx="11" cy="11" r="5" fill="#39475d" stroke="#aab" stroke-width=".6"/><text x="11" y="14" text-anchor="middle" fill="#fff" font-size="8">4</text></svg></button>
  </div>
</footer>
<script src="https://cdn.jsdelivr.net/npm/bootstrap@5.3.0/dist/js/bootstrap.bundle.min.js"></script>
<script>
// Sketch grid: one line every 5 mm, a stronger one every 25 mm
(function () {
  const step = 16.04, ox = 607, oy = 420, minor = [], major = [];
  for (let i = -38; i <= 42; i++) (i % 5 ? minor : major).push(`M${Math.round(ox + i * step) + .5} 91V660`);
  for (let i = -20; i <= 14; i++) (i % 5 ? minor : major).push(`M0 ${Math.round(oy + i * step) + .5}H1280`);
  document.getElementById('grid').innerHTML =
    `<path stroke="#eeeeee" d="${minor.join('')}"/><path stroke="#d9d9d9" d="${major.join('')}"/>`;
})();
</script>
</body>
</html>
